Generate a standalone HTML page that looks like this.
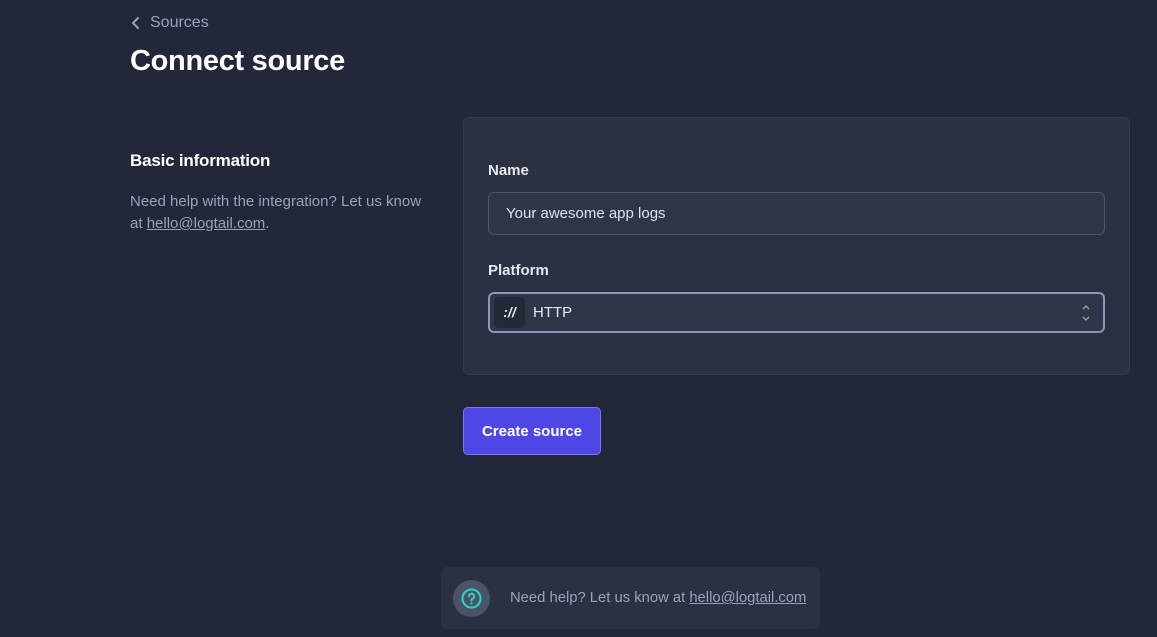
<!DOCTYPE html>
<html><head><meta charset="utf-8"><style>
*{box-sizing:border-box;margin:0;padding:0}
body{width:1157px;height:637px;background:#222739;font-family:"Liberation Sans",sans-serif;position:relative;overflow:hidden;color:#fff}
.abs{position:absolute}
.muted{color:#9ba3b9}
a{color:#9ba3b9;text-decoration:underline}
</style></head><body>
<div class="abs" style="left:131px;top:14px;font-size:16px;color:#9ba3b9;display:flex;align-items:center">
<svg width="10" height="14" viewBox="0 0 10 14" style="margin-right:9px"><path d="M7 2L2 7l5 5" stroke="#9ba3b9" stroke-width="2" fill="none" stroke-linecap="round" stroke-linejoin="round"/></svg>Sources</div>
<div class="abs" style="left:130px;top:45px;font-size:29px;font-weight:bold;color:#fff;letter-spacing:-0.3px">Connect source</div>
<div class="abs" style="left:130px;top:151px;font-size:17px;font-weight:bold;letter-spacing:-0.2px">Basic information</div>
<div class="abs muted" style="left:130px;top:191px;width:300px;font-size:15px;line-height:22px">Need help with the integration? Let us know at <a>hello@logtail.com</a>.</div>
<div class="abs" style="left:463px;top:117px;width:667px;height:258px;background:#2a3142;border:1px solid #323a4c;border-radius:6px"></div>
<div class="abs" style="left:488px;top:162px;font-size:15px;font-weight:bold;color:#e6e8ee">Name</div>
<div class="abs" style="left:488px;top:192px;width:617px;height:43px;background:#2f3648;border:1.5px solid #4d566b;border-radius:6px;padding-left:17px;line-height:42px;font-size:15px;color:#dfe2ea">Your awesome app logs</div>
<div class="abs" style="left:488px;top:262px;font-size:15px;font-weight:bold;color:#e6e8ee">Platform</div>
<div class="abs" style="left:488px;top:292px;width:617px;height:41px;background:#2f3648;border:2px solid #8a97b8;border-radius:6px"></div>
<div class="abs" style="left:494px;top:297px;width:31px;height:31px;background:#232939;border-radius:5px;font-size:14px;font-weight:bold;color:#e6e8ee;text-align:center;line-height:31px;font-style:italic">://</div>
<div class="abs" style="left:533px;top:304px;font-size:15px;color:#e6e8ee">HTTP</div>
<svg class="abs" style="left:1080px;top:304px" width="12" height="18" viewBox="0 0 12 18"><path d="M3 5l3-3 3 3M3 13l3 3 3-3" stroke="#9ba3b9" stroke-width="1.3" fill="none"/></svg>
<div class="abs" style="left:463px;top:407px;width:138px;height:48px;background:#4e46e5;border:1px solid #7d77f0;border-radius:5px;font-size:15px;font-weight:bold;text-align:center;line-height:48px">Create source</div>
<div class="abs" style="left:441px;top:567px;width:379px;height:62px;background:#2a3142;border-radius:6px"></div>
<div class="abs" style="left:453px;top:580px;width:37px;height:37px;border-radius:50%;background:#4a5469"></div>
<svg class="abs" style="left:460px;top:587px" width="23" height="23" viewBox="0 0 23 23"><circle cx="11.5" cy="11.5" r="9" stroke="#2dd4bf" stroke-width="2" fill="none"/><path d="M9 9.3a2.6 2.6 0 1 1 3.3 2.5c-.6.2-.8.7-.8 1.3v.6" stroke="#2dd4bf" stroke-width="2" fill="none" stroke-linecap="round"/><circle cx="11.5" cy="16.5" r="1.1" fill="#2dd4bf"/></svg>
<div class="abs muted" style="left:510px;top:590px;font-size:14.8px">Need help? Let us know at <a>hello@logtail.com</a></div>
</body></html>
